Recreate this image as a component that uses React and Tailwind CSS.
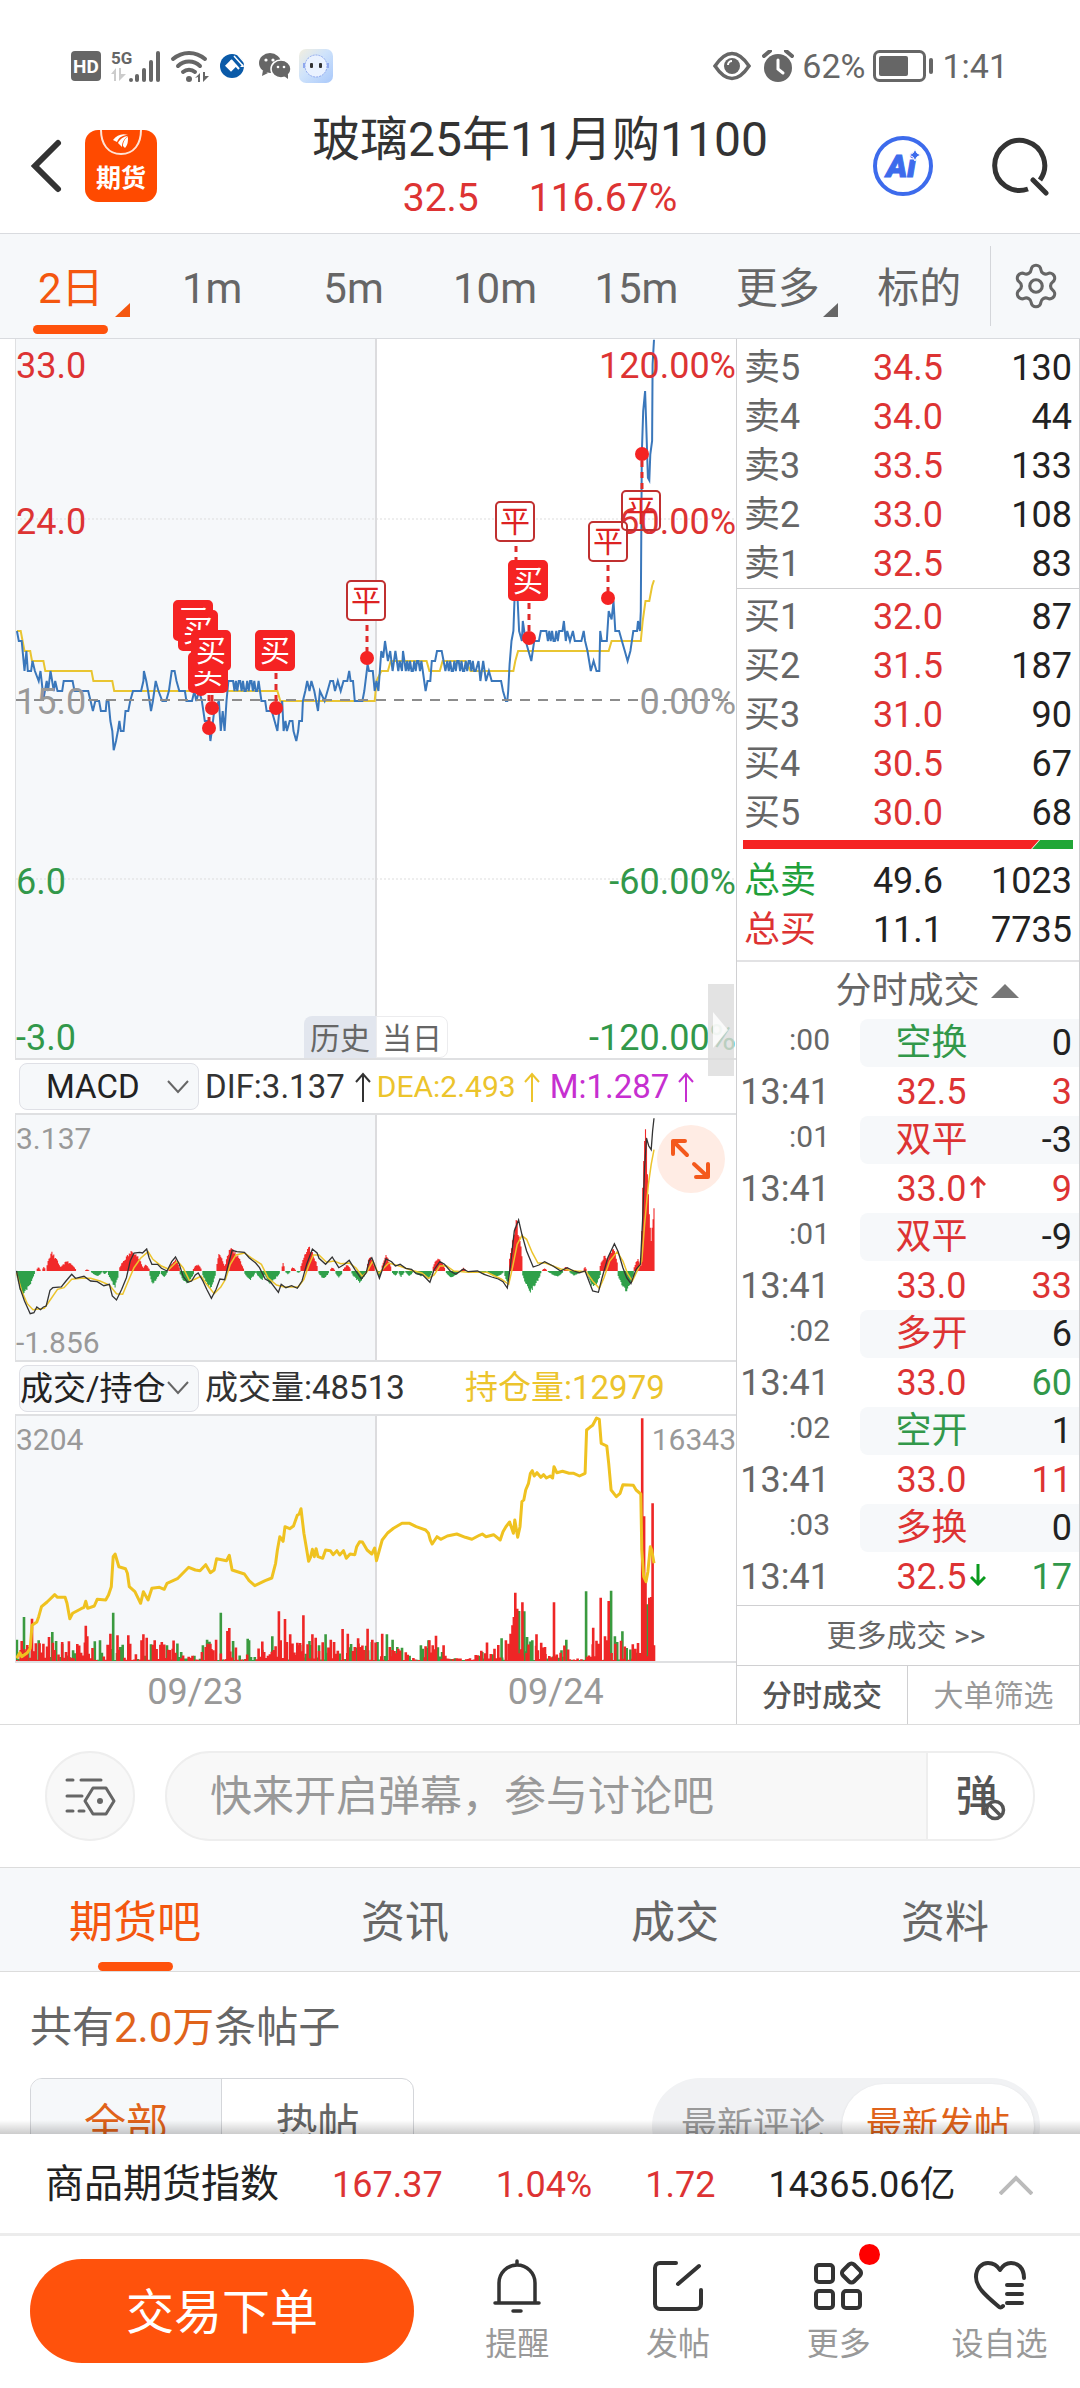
import React from "react";
import { Settings } from "lucide-react";

/* ---------- chart data: flat [x, y, x, y, ...] in sampling units ---------- */

const KX = 2.119;
const toPoints = (raw, base) => {
  const out = [];
  for (let i = 0; i < raw.length; i += 2) {
    out.push(`${((raw[i] - 32) / KX).toFixed(1)},${(raw[i + 1] / 3 - base).toFixed(1)}`);
  }
  return out.join(" ");
};
const zigzag = (from, to, a, b) => {
  const out = [];
  let k = 0;
  for (let x = from; x <= to; x += 3) {
    out.push(x, k % 2 ? b : a);
    k += k % 5 === 3 ? 2 : 1;
  }
  return out;
};

const PRICE = [
  34, 900, 38, 930, 44, 930, 50, 1020, 54, 960, 57, 1020, 64, 1020, 67, 990, 72, 1020, 80, 1050, 84, 1020, 87, 1060, 90, 1105, 97, 1050, 100, 1080,
  105, 1020, 112, 1080, 115, 1050, 120, 1080, 130, 1080, 133, 1050, 152, 1050, 156, 1080, 185, 1080, 190, 1110, 195, 1140, 200, 1110, 208, 1110, 212, 1140,
  222, 1140, 224, 1110, 228, 1110, 232, 1170, 236, 1200, 239, 1258, 244, 1230, 248, 1200, 251, 1170, 254, 1200, 260, 1200, 264, 1140, 270, 1140, 274, 1110,
  280, 1080, 297, 1080, 302, 1050, 303, 1020, 308, 1050, 312, 1080, 318, 1140, 322, 1110, 328, 1050, 334, 1080, 342, 1110, 350, 1110, 356, 1080,
  362, 1020, 368, 1020, 372, 1050, 378, 1080, 390, 1080, 393, 1110, 405, 1110, 410, 1080, 414, 1110, 420, 1080, 426, 1110, 432, 1170, 440, 1170, 444, 1230,
  447, 1200, 452, 1140, 462, 1110, 466, 1200, 470, 1140, 474, 1200, 478, 1110, 482, 1050, 492, 1050, ...zigzag(495, 548, 1080, 1050),
  552, 1110, 560, 1110, 563, 1140, 574, 1140, 580, 1170, 586, 1200, 590, 1140, 596, 1110, 599, 1200, 603, 1170, 606, 1200, 612, 1170, 618, 1170, 620, 1200,
  626, 1230, 630, 1200, 632, 1170, 638, 1170, 640, 1110, 645, 1080, 649, 1050, 654, 1080, 658, 1050, 664, 1080, 672, 1140, 676, 1080, 686, 1110, 692, 1080,
  698, 1050, 704, 1050, 708, 1080, 714, 1050, 720, 1080, 726, 1050, 734, 1050, 738, 1020, 741, 1050, 746, 1050, 750, 1110, 766, 1110, 770, 1080,
  777, 1000, 780, 1020, 788, 1020, 792, 1080, 796, 1050, 800, 1080, 806, 960, 810, 980, 814, 930, 820, 990, 825, 960, 830, 1020, 836, 960, 842, 1020,
  845, 990, 850, 1020, 852, 960, 858, 1020, ...zigzag(861, 895, 990, 1020), 900, 1080, 904, 1050, 910, 1050, 913, 990, 920, 990, 924, 960, 934, 960,
  938, 990, 942, 1020, ...zigzag(946, 1008, 990, 1020), 1012, 990, 1016, 1050, 1022, 990, 1028, 1050, 1034, 1020, 1040, 1050, 1060, 1050, 1064, 1080,
  1070, 1110, 1073, 1110, 1075, 1080, 1078, 1000, 1082, 930, 1086, 900, 1089, 780, 1094, 780, 1098, 900, 1104, 930, 1106, 870, 1112, 930, 1118, 960,
  1124, 990, 1130, 930, 1140, 930, 1144, 900, 1156, 900, 1159, 930, ...zigzag(1162, 1184, 900, 930), 1190, 900, 1193, 870, 1197, 930, 1200, 900,
  1206, 930, 1212, 900, 1216, 930, 1230, 930, 1235, 900, 1238, 930, 1243, 960, 1250, 1020, 1256, 990, 1262, 1020, 1268, 1020, 1270, 900, 1273, 930,
  1284, 930, 1288, 840, 1294, 865, 1298, 810, 1302, 900, 1310, 900, 1316, 930, 1322, 960, 1328, 990, 1334, 960, 1340, 900, 1348, 900, 1350, 870, 1354, 900,
  1356, 840, 1358, 370, 1361, 240, 1365, 180, 1367, 260, 1371, 440, 1374, 448, 1376, 370, 1380, 330, 1381, 100, 1384, 26,
];
const AVG = [
  34, 900, 42, 900, 50, 960, 62, 960, 66, 990, 90, 990, 94, 1020, 192, 1020, 196, 1050, 236, 1050, 240, 1080, 586, 1080, 592, 1110, 792, 1110, 796, 1050,
  806, 1020, 820, 1020, 826, 990, 902, 990, 908, 1020, 930, 1020, 936, 990, 985, 990, 995, 1020, 1086, 1020, 1090, 990, 1096, 960, 1288, 960, 1294, 930,
  1356, 930, 1360, 870, 1366, 810, 1374, 810, 1380, 765, 1384, 748,
];
const HUMPS = [
  [33, 46, 72, -80], [75, 80, 84, 14], [87, 91, 95, 14], [96, 107, 128, 60], [122, 140, 160, 32], [178, 182, 188, 5], [190, 205, 215, -18], [215, 220, 226, -10],
  [226, 242, 250, -50], [250, 280, 302, 68], [300, 306, 316, 22], [314, 322, 338, -42], [338, 345, 354, -20], [354, 370, 380, 36], [378, 394, 410, -42],
  [406, 417, 426, 22], [426, 444, 456, -55], [456, 463, 476, 58], [474, 487, 515, 76], [515, 528, 540, -30], [540, 553, 560, -30], [558, 568, 592, -42],
  [594, 598, 602, 24], [602, 608, 614, -10], [614, 618, 626, 12], [626, 630, 636, -6], [634, 653, 672, 78], [672, 684, 696, -26], [697, 702, 708, 12],
  [708, 716, 724, -24], [724, 734, 742, 20], [742, 760, 775, -36], [775, 782, 793, 50], [796, 802, 807, -20], [806, 816, 828, 50], [828, 836, 842, -16],
  [842, 848, 856, -18], [856, 866, 874, -16], [874, 890, 900, -16], [895, 906, 914, -28], [914, 926, 942, 44], [942, 954, 972, -22], [974, 980, 986, 10],
  [1012, 1020, 1030, -10], [1030, 1050, 1066, -20], [1066, 1073, 1078, -40], [1076, 1093, 1106, 160], [1104, 1122, 1145, -66], [1146, 1152, 1158, 8],
  [1158, 1180, 1192, -18], [1192, 1197, 1204, 14], [1204, 1214, 1232, -14], [1234, 1238, 1241, 14], [1242, 1256, 1272, -54], [1268, 1280, 1290, 54],
  [1280, 1298, 1308, 78], [1306, 1324, 1342, -66], [1340, 1350, 1358, 40],
];
const DIF = [
  33, 660, 40, 710, 50, 750, 62, 788, 70, 785, 76, 768, 84, 776, 90, 768, 96, 765, 104, 718, 110, 710, 128, 708, 138, 690, 150, 670, 158, 682, 176, 676,
  190, 690, 204, 692, 218, 704, 230, 700, 236, 735, 245, 747, 256, 715, 266, 680, 274, 630, 282, 606, 294, 604, 300, 606, 309, 594, 314, 620, 320, 640,
  332, 640, 340, 652, 352, 660, 362, 632, 370, 618, 378, 640, 386, 676, 396, 694, 404, 690, 412, 672, 418, 666, 428, 690, 436, 715, 446, 742, 456, 715,
  464, 684, 474, 686, 482, 640, 490, 598, 500, 602, 516, 604, 526, 620, 540, 636, 548, 650, 560, 684, 572, 694, 588, 724, 594, 700, 604, 710, 616, 704,
  628, 712, 638, 690, 648, 640, 660, 594, 670, 606, 674, 622, 688, 640, 702, 618, 716, 650, 728, 640, 738, 628, 750, 655, 764, 684, 774, 665, 780, 630,
  786, 620, 794, 650, 802, 682, 816, 624, 828, 632, 836, 645, 846, 640, 858, 652, 870, 655, 880, 668, 894, 672, 909, 694, 918, 656, 930, 632, 940, 640,
  952, 660, 964, 670, 980, 654, 990, 662, 1010, 660, 1024, 670, 1040, 678, 1054, 684, 1064, 692, 1073, 711, 1080, 640, 1088, 540, 1097, 507, 1104, 550,
  1114, 600, 1128, 648, 1140, 642, 1152, 632, 1170, 645, 1186, 660, 1200, 650, 1214, 660, 1226, 665, 1238, 660, 1246, 690, 1254, 720, 1266, 724, 1274, 680,
  1286, 620, 1300, 578, 1308, 602, 1318, 650, 1326, 680, 1335, 698, 1346, 655, 1355, 640, 1360, 500, 1364, 350, 1368, 262, 1373, 285, 1378, 296, 1381, 240, 1384, 202,
];
const DEA = [
  33, 665, 44, 720, 56, 758, 68, 776, 92, 772, 104, 748, 120, 715, 134, 710, 150, 685, 170, 682, 190, 682, 210, 690, 230, 702, 245, 728, 258, 730, 270, 690,
  282, 650, 296, 622, 312, 602, 322, 625, 340, 645, 356, 655, 374, 630, 386, 650, 400, 690, 412, 684, 424, 676, 436, 700, 452, 728, 466, 708, 476, 685,
  486, 640, 498, 612, 516, 606, 530, 620, 552, 640, 566, 680, 584, 702, 600, 708, 630, 708, 642, 685, 652, 645, 662, 612, 674, 612, 690, 634, 706, 630,
  720, 638, 738, 636, 752, 650, 766, 676, 776, 662, 788, 630, 800, 668, 812, 650, 822, 636, 846, 646, 870, 658, 892, 666, 906, 682, 918, 672, 930, 645,
  944, 644, 960, 660, 990, 664, 1030, 664, 1060, 684, 1076, 700, 1084, 650, 1094, 580, 1104, 554, 1114, 565, 1126, 605, 1138, 636, 1154, 636, 1186, 654,
  1220, 660, 1240, 662, 1254, 690, 1268, 712, 1278, 680, 1290, 630, 1306, 602, 1318, 630, 1328, 668, 1338, 690, 1350, 655, 1358, 630, 1364, 520, 1372, 400,
  1378, 340, 1384, 296,
];
const OPEN_INTEREST = [
  33, 925, 40, 908, 44, 920, 56, 908, 62, 895, 66, 826, 76, 816, 80, 800, 86, 770, 98, 756, 114, 734, 120, 742, 136, 742, 140, 760, 146, 806, 152, 790,
  170, 776, 176, 772, 180, 754, 184, 775, 198, 768, 204, 748, 222, 750, 228, 735, 234, 710, 238, 620, 242, 612, 250, 650, 264, 656, 268, 670, 272, 710,
  284, 725, 296, 760, 302, 725, 312, 750, 320, 715, 336, 712, 346, 718, 352, 700, 374, 686, 398, 652, 412, 660, 422, 662, 434, 644, 444, 668, 452, 660,
  457, 626, 478, 632, 484, 616, 490, 660, 516, 672, 526, 692, 538, 707, 560, 692, 574, 684, 582, 640, 586, 600, 591, 560, 598, 574, 602, 530, 612, 536,
  620, 528, 628, 496, 632, 492, 636, 476, 642, 550, 647, 590, 652, 634, 656, 622, 660, 598, 664, 620, 668, 596, 672, 620, 682, 625, 688, 600, 698, 602,
  704, 614, 712, 602, 718, 615, 726, 602, 732, 625, 740, 612, 750, 614, 754, 590, 760, 575, 766, 576, 776, 600, 786, 612, 792, 594, 796, 632, 802, 600,
  808, 570, 820, 548, 832, 535, 850, 520, 866, 520, 880, 530, 900, 540, 906, 550, 910, 570, 914, 582, 924, 560, 932, 568, 946, 558, 966, 552, 984, 562,
  998, 568, 1014, 556, 1020, 552, 1028, 560, 1044, 554, 1058, 570, 1064, 545, 1070, 530, 1078, 516, 1086, 550, 1089, 510, 1095, 562, 1100, 530, 1104, 455,
  1108, 450, 1112, 420, 1118, 400, 1122, 370, 1126, 362, 1130, 378, 1136, 368, 1144, 382, 1150, 374, 1156, 384, 1164, 378, 1169, 384, 1172, 350, 1178, 368,
  1190, 364, 1204, 370, 1214, 370, 1226, 378, 1238, 370, 1241, 240, 1248, 232, 1254, 226, 1262, 204, 1268, 208, 1272, 280, 1284, 288, 1288, 340, 1293, 420,
  1304, 440, 1312, 430, 1318, 404, 1340, 406, 1346, 420, 1356, 432, 1358, 600, 1362, 680, 1367, 695, 1371, 665, 1376, 590, 1379, 600, 1384, 640,
];
const RED_VOL = [
  66, 805, 44, 872, 56, 884, 102, 860, 130, 875, 144, 873, 180, 826, 183, 858, 232, 850, 247, 855, 270, 855, 274, 880, 302, 852, 298, 870, 309, 862, 341, 875, 364, 895, 444, 880, 456, 868,
  480, 842, 484, 833, 589, 783, 593, 870, 602, 806, 613, 852, 628, 877, 634, 878, 641, 795, 660, 852, 667, 862, 699, 868, 724, 836, 735, 850, 750, 890, 757, 864,
  777, 835, 787, 868, 808, 850, 824, 890, 900, 888, 908, 870, 915, 885, 922, 856, 1046, 895, 1070, 870, 1076, 880, 1080, 850, 1084, 825, 1087, 800, 1090, 727, 1094, 775,
  1105, 756, 1135, 852, 1145, 877, 1153, 890, 1172, 756, 1255, 832, 1266, 880, 1271, 742, 1280, 858, 1284, 870, 1288, 752, 1339, 882, 1344, 895, 1359, 204, 1363, 498, 1366, 690, 1374, 742, 1378, 740, 1381, 459, 1384, 885,
];
const GREEN_VOL = [
  34, 868, 49, 800, 80, 870, 109, 845, 117, 872, 153, 900, 199, 873, 238, 787, 253, 890, 318, 882, 352, 885, 382, 905, 428, 885, 437, 868, 466, 787, 492, 872, 523, 865,
  554, 898, 575, 858, 654, 872, 674, 885, 688, 852, 798, 880, 818, 852, 830, 868, 840, 890, 935, 905, 1020, 905, 1061, 864, 1098, 782, 1109, 783, 1115, 860, 1122, 875, 1198, 868, 1188, 900,
  1240, 723, 1293, 721, 1301, 858, 1317, 843, 1369, 762,
];

const random = (start) => {
  let seed = start;
  return () => (seed = (seed * 16807) % 2147483647) / 2147483647;
};

const macdBars = (() => {
  const red = [];
  const green = [];
  const rnd = random(11);
  HUMPS.forEach(([a, p, b, h]) => {
    for (let x = a; x <= b; x += 2) {
      const t = x < p ? (x - a) / (p - a) : (b - x) / (b - p);
      const v = ((h * Math.pow(Math.max(t, 0), 0.65)) / 3) * (0.8 + 0.2 * rnd());
      (h > 0 ? red : green).push(`M${((x - 32) / KX).toFixed(1)} 156v${(-v).toFixed(1)}`);
    }
  });
  [[1358, 120], [1360, 250], [1362, 330], [1364, 390], [1366, 425], [1368, 400], [1370, 290], [1372, 230], [1374, 170], [1376, 130], [1378, 90], [1380, 130], [1382, 155], [1384, 188]].forEach(
    ([x, h]) => red.push(`M${((x - 32) / KX).toFixed(1)} 156v${(-h / 3).toFixed(1)}`)
  );
  return { red: red.join(""), green: green.join("") };
})();

const volumeBars = (() => {
  const red = [];
  const green = [];
  const rnd = random(7);
  const bar = (x, top) => `M${((x - 32) / KX).toFixed(1)} 246V${(246 - (935 - top) / 3).toFixed(1)}`;
  for (let x = 34; x < 1386; x += 4) {
    const quiet = (x > 945 && x < 1005) || (x > 1205 && x < 1235) ? 0.12 : (x > 376 && x < 420) || (x > 1160 && x < 1185) ? 0.4 : 1;
    const h = 6 + Math.pow(rnd(), 2.2) * 60 * quiet;
    (rnd() > 0.32 ? red : green).push(bar(x, 935 - h));
  }
  for (let i = 0; i < RED_VOL.length; i += 2) red.push(bar(RED_VOL[i], RED_VOL[i + 1]));
  for (let i = 0; i < GREEN_VOL.length; i += 2) green.push(bar(GREEN_VOL[i], GREEN_VOL[i + 1]));
  return { red: red.join(""), green: green.join("") };
})();

/* trade flags: x, y, label, filled */
const FLAGS = [
  [158, 262, "买", true], [163, 272, "买", true], [173, 314, "买", true], [176, 292, "买", true], [240, 292, "买", true],
  [331, 242, "平", false], [480, 163, "平", false], [493, 222, "买", true], [573, 183, "平", false], [606, 152, "平", false],
];
/* dot x, dot y, other end of the dashed stem */
const DOTS = [
  [196, 369, 334], [193, 389, 356], [185, 350, 345], [260, 369, 334], [351, 319, 286], [500, 240, 207], [513, 299, 264], [592, 259, 226], [626, 115, 150],
];

/* ---------- small icons ---------- */

const Down = () => (
  <svg className="pointer-events-none absolute right-[10px] top-1/2 -mt-[7px] h-[14px] w-[22px]" viewBox="0 0 22 14" fill="none" stroke="#666" strokeWidth="2">
    <path d="M1 1l10 11L21 1" />
  </svg>
);
const Up = () => (
  <svg className="h-[30px] w-[16px]" viewBox="0 0 16 30" fill="none" stroke="currentColor" strokeWidth="2">
    <path d="M8 30V2M1 10l7-8 7 8" />
  </svg>
);

function StatusBar() {
  return (
    <div className="flex h-[110px] items-center justify-between pl-[71px] pr-[72px] pt-[22px] text-[#666]">
      <div className="flex items-center">
        <svg className="h-[30px] w-[30px]" viewBox="0 0 30 30">
          <rect width="30" height="30" rx="4" fill="#666" />
          <text x="15" y="22" textAnchor="middle" fontSize="19" fontWeight="700" fill="#fff">HD</text>
        </svg>
        <svg className="ml-[10px] h-[34px] w-[52px]" viewBox="0 0 52 34" fill="#666">
          <text x="0" y="15" fontSize="17" fontWeight="700">5G</text>
          <path d="M0 25l5-6v13H3v-7zM8 19h2v6h5l-7 7z" fill="#ccc" />
          <circle cx="20" cy="31" r="2" />
          <rect x="24" y="25" width="4" height="8" rx="2" /><rect x="31" y="19" width="4" height="14" rx="2" />
          <rect x="38" y="11" width="4" height="22" rx="2" /><rect x="45" y="2" width="4" height="31" rx="2" />
        </svg>
        <svg className="ml-[7px] h-[34px] w-[40px]" viewBox="0 0 40 34" fill="none" stroke="#666" strokeWidth="4" strokeLinecap="round">
          <path d="M3 10a24 24 0 0 1 32 0M8 17a16 16 0 0 1 22 0M13 23a9 9 0 0 1 12 0" />
          <circle cx="19" cy="30" r="3" fill="#666" stroke="none" />
          <path d="M25 29l5-5v9h-2v-5zM33 23h2v4h4l-6 6z" fill="#666" stroke="none" />
        </svg>
        <svg className="ml-[9px] h-[26px] w-[26px]" viewBox="0 0 26 26">
          <circle cx="13" cy="13" r="12" fill="#0a5aa8" />
          <path d="M12 5l8 8-8 8-8-8z" fill="#fff" transform="translate(3 3) scale(.75)" />
          <path d="M12 7l8 9" stroke="#fff" strokeWidth="2" />
          <path d="M15 3l9 10M19 2l6 7" stroke="#fff" strokeWidth="1.500" />
          <path d="M25 14l-4 0 3-3z" fill="#fff" />
        </svg>
        <svg className="ml-[13px] h-[28px] w-[34px]" viewBox="0 0 34 28" fill="#666">
          <ellipse cx="12" cy="11" rx="11" ry="10" /><path d="M5 18l-1 6 6-3z" />
          <ellipse cx="23" cy="17" rx="10" ry="9" stroke="#fff" strokeWidth="1.5" /><path d="M26 24l4 3v-5z" />
          <circle cx="8" cy="8" r="1.6" fill="#fff" /><circle cx="15" cy="8" r="1.6" fill="#fff" />
          <circle cx="20" cy="15" r="1.3" fill="#fff" /><circle cx="26" cy="15" r="1.3" fill="#fff" />
        </svg>
        <svg className="ml-[7px] h-[34px] w-[34px]" viewBox="0 0 34 34">
          <defs><linearGradient id="bot" x1="0" y1="0" x2="1" y2="1"><stop offset="0" stopColor="#f3efdf" /><stop offset="0.45" stopColor="#cfe3fb" /><stop offset="1" stopColor="#a9c8fa" /></linearGradient></defs>
          <rect width="34" height="34" rx="7" fill="url(#bot)" />
          <circle cx="17" cy="17" r="11" fill="#eaf2ff" stroke="#8fa8ee" strokeDasharray="2 1" />
          <path d="M5 14v5M29 14v5" stroke="#8fa8ee" strokeWidth="2" />
          <rect x="11" y="14" width="3" height="5" rx="1" fill="#333" /><rect x="20" y="14" width="3" height="5" rx="1" fill="#333" />
        </svg>
      </div>
      <div className="flex items-center text-[34px] leading-[40px]">
        <svg className="h-[30px] w-[38px]" viewBox="0 0 38 30" fill="none" stroke="#666" strokeWidth="3.5">
          <path d="M2 15C8 6 13 2.500 19 2.500S30 6 36 15c-6 9-11 12.500-17 12.500S8 24 2 15z" />
          <circle cx="19" cy="15" r="8" fill="#666" stroke="none" /><path d="M15 14a4 4 0 0 1 4-4" stroke="#fff" strokeWidth="2" />
        </svg>
        <svg className="ml-[11px] h-[32px] w-[32px]" viewBox="0 0 32 32">
          <circle cx="16" cy="18" r="14" fill="#666" />
          <path d="M2 6l6-5M30 6l-6-5" stroke="#666" strokeWidth="4" strokeLinecap="round" />
          <path d="M16 10v9l5 4" stroke="#fff" strokeWidth="3" fill="none" strokeLinecap="round" />
        </svg>
        <span className="ml-[8px]">62%</span>
        <svg className="ml-[8px] h-[32px] w-[60px]" viewBox="0 0 60 32">
          <rect x="1.500" y="1.500" width="50" height="29" rx="5" fill="none" stroke="#666" strokeWidth="3" />
          <rect x="6" y="6" width="29" height="20" rx="2" fill="#666" />
          <rect x="56" y="8" width="4" height="16" rx="2" fill="#666" />
        </svg>
        <span className="ml-[9px]">1:41</span>
      </div>
    </div>
  );
}

function Header() {
  return (
    <header className="grid h-[123px] grid-cols-[1fr_auto_1fr] items-center pb-[11px]">
      <div className="flex items-center pl-[29px]">
        <button type="button" aria-label="返回">
          <svg className="block h-[56px] w-[34px]" viewBox="0 0 34 56" fill="none" stroke="#333" strokeWidth="6" strokeLinecap="round">
            <path d="M29 5L6 28l23 23" />
          </svg>
        </button>
        <svg className="ml-[22px] h-[72px] w-[72px]" viewBox="0 0 72 72">
          <rect width="72" height="72" rx="13" fill="#ff4a00" />
          <path d="M16 0c0 14 7 24 20 24S56 14 56 0" fill="none" stroke="#ffe3d5" strokeWidth="2" />
          <path d="M28 10c4-5 9-7 15-5-5 0-9 2-11 7zM33 13c2-4 6-7 10-7-4 3-6 6-6 11zM38 16c0-4 2-8 5-9 0 4 0 8-3 11z" fill="#fff" />
          <text x="36" y="57" textAnchor="middle" fontSize="25" fontWeight="700" fill="#fff">期货</text>
        </svg>
      </div>
      <div className="text-center">
        <h1 className="text-[48px] leading-[56px] text-[#333]">玻璃25年11月购1100</h1>
        <p className="mt-[8px] flex justify-center gap-[50px] text-[39px] leading-[44px] text-[#dd3333]">
          <span>32.5</span>
          <span>116.67%</span>
        </p>
      </div>
      <div className="flex items-center justify-end gap-[58px] pr-[29px]">
        <button type="button" aria-label="Ai">
          <svg className="block h-[60px] w-[60px]" viewBox="0 0 60 60">
            <circle cx="30" cy="30" r="28" fill="none" stroke="#3d6bec" strokeWidth="4" />
            <text x="28" y="41" textAnchor="middle" fontSize="32" fontWeight="900" fontStyle="italic" fill="#3d6bec" stroke="#3d6bec" strokeWidth="1">Ai</text>
            <path d="M42 13q1 5 6 6-5 1-6 6-1-5-6-6 5-1 6-6z" fill="#3d6bec" stroke="#fff" strokeWidth="1" />
          </svg>
        </button>
        <button type="button" aria-label="搜索">
          <svg className="block h-[60px] w-[60px]" viewBox="0 0 60 60" fill="none" stroke="#333" strokeWidth="5">
            <path d="M37 53a25 25 0 1 1 12-9" />
            <path d="M42 44l13 13" strokeLinecap="round" />
          </svg>
        </button>
      </div>
    </header>
  );
}

const PERIODS = ["2日", "1m", "5m", "10m", "15m", "更多", "标的"];

function PeriodTabs() {
  return (
    <nav className="flex h-[106px] border-y border-[#d9dbdf] bg-[#f6f8fa] text-[42px] text-[#666]">
      <div className="grid flex-1 grid-cols-7">
        {PERIODS.map((p, i) => (
          <button key={p} type="button" className={i === 0 ? "relative pt-[4px] text-[#f4570f]" : "relative pt-[4px]"}>
            {p}
            {(i === 0 || i === 5) && (
              <svg className="absolute bottom-[21px] right-[11px] h-[14px] w-[15px]" viewBox="0 0 15 14" fill="currentColor"><path d="M15 0v14H0z" /></svg>
            )}
            {i === 0 && <span className="absolute bottom-[4px] left-[33px] h-[9px] w-[75px] rounded-full bg-[#ff520c]" />}
          </button>
        ))}
      </div>
      <div className="my-[12px] w-px bg-[#d4d6da]" />
      <button type="button" aria-label="设置" className="flex w-[89px] items-center justify-center">
        <Settings size={50} strokeWidth={1.5} />
      </button>
    </nav>
  );
}

const GRID_LABELS = [
  ["33.0", "120.00%", "top-[7px] text-[#dd3333]"],
  ["24.0", "60.00%", "top-[163px] text-[#dd3333]"],
  ["15.0", "0.00%", "top-[343px] text-[#999]"],
  ["6.0", "-60.00%", "top-[523px] text-[#32984a]"],
  ["-3.0", "-120.00%", "top-[679px] text-[#32984a]"],
];

function PriceChart() {
  return (
    <div className="relative border-b-2 border-l border-[#dfe0e2]">
      <svg className="block h-[719px] w-full" viewBox="0 0 720 719" preserveAspectRatio="none" fill="none">
        <rect width="360" height="719" fill="#f6f8fa" />
        <path d="M360 0v719" stroke="#dcdcde" strokeWidth="2" />
        <path d="M0 180h720M0 540h720" stroke="#ddd" strokeDasharray="2 2" />
        <polyline points={toPoints(AVG, 8)} stroke="#e9c531" strokeWidth="2" />
        <polyline points={toPoints(PRICE, 8)} stroke="#3a77bb" strokeWidth="2" />
        <path d="M0 361h720" stroke="#8c8c8c" strokeWidth="2" strokeDasharray="10 8" />
      </svg>
      {GRID_LABELS.map(([l, r, c]) => (
        <div key={l} className={`absolute inset-x-0 flex justify-between text-[36px] leading-[40px] ${c}`}>
          <span>{l}</span>
          <span>{r}</span>
        </div>
      ))}
      <svg className="absolute inset-0 h-[719px] w-full" viewBox="0 0 720 719" preserveAspectRatio="none">
        {DOTS.map(([x, y, s]) => (
          <g key={`${x}-${y}`}>
            <path d={`M${x} ${s}V${y}`} stroke="#e02a2a" strokeWidth="3" strokeDasharray="6 5" />
            <circle cx={x} cy={y} r="7" fill="#f52323" />
          </g>
        ))}
        {FLAGS.map(([x, y, t, fill]) => (
          <g key={`${x}-${y}`}>
            <rect x={x} y={y} width="38" height="39" rx="4" fill={fill ? "#f52323" : "#fff"} fillOpacity={!fill && y < 160 ? 0 : 1} stroke={fill ? "#f52323" : "#c03030"} strokeWidth="2" />
            <text x={x + 19} y={y + 30} textAnchor="middle" fontSize="30" fill={fill ? "#fff" : "#dd2222"}>{t}</text>
          </g>
        ))}
      </svg>
      <div className="absolute bottom-0 left-0 right-0 flex justify-center text-[30px] leading-[42px] text-[#666]">
        <button type="button" className="h-[42px] w-[72px] rounded-tl-lg bg-[#e2e6ee] pt-[2px]">历史</button>
        <button type="button" className="h-[42px] w-[72px] rounded-r-lg border border-[#ececee] bg-white pt-px">当日</button>
      </div>
      <button type="button" aria-label="收起" className="absolute -bottom-[18px] right-[2px] z-10 h-[92px] w-[26px] bg-[#dcdcdc]/80">
        <svg className="mx-auto block h-[36px] w-[16px]" viewBox="0 0 16 36" fill="#fff" fillOpacity="0.8"><path d="M0 0l15 18L0 36z" /></svg>
      </button>
    </div>
  );
}

const selectBox = "h-[47px] w-[180px] appearance-none rounded-lg border border-[#dfe0e6] bg-[#f6f8fa] text-[33px] leading-[45px] text-[#222] outline-none";

function ChartsColumn() {
  return (
    <section className="min-w-0 pl-[15px]">
      <PriceChart />
      <div className="flex h-[53px] items-center whitespace-nowrap pl-[4px] text-[33px] leading-[40px]">
        <div className="relative">
          <select aria-label="指标" className={`${selectBox} pl-[26px]`} defaultValue="MACD"><option>MACD</option></select>
          <Down />
        </div>
        <span className="ml-[6px] flex items-center gap-[10px] text-[#333]">DIF:3.137 <Up /></span>
        <span className="ml-[6px] flex items-center gap-[8px] text-[30px] text-[#ecc42c]">DEA:2.493 <Up /></span>
        <span className="ml-[10px] flex items-center gap-[9px] text-[#c62fd0]">M:1.287 <Up /></span>
      </div>
      <div className="relative border-y-2 border-l border-[#dfe0e2]">
        <svg className="block h-[245px] w-full" viewBox="0 0 720 245" preserveAspectRatio="none" fill="none">
          <rect width="360" height="245" fill="#f6f8fa" />
          <path d="M360 0v245" stroke="#dcdcde" strokeWidth="2" />
          <path d={macdBars.red} stroke="#f12a2a" strokeWidth="1.1" />
          <path d={macdBars.green} stroke="#2fa04a" strokeWidth="1.1" />
          <polyline points={toPoints(DEA, 64)} stroke="#ecc42c" strokeWidth="1.5" />
          <polyline points={toPoints(DIF, 64)} stroke="#333" strokeWidth="1.3" />
        </svg>
        <span className="absolute left-0 top-[6px] text-[30px] leading-[36px] text-[#999]">3.137</span>
        <span className="absolute -bottom-px left-0 text-[30px] leading-[36px] text-[#999]">-1.856</span>
        <button type="button" aria-label="全屏" className="absolute right-[11px] top-[10px] flex h-[68px] w-[68px] items-center justify-center rounded-full bg-[#ffece4]">
          <svg className="h-[44px] w-[44px]" viewBox="0 0 44 44" fill="none" stroke="#f4591c" strokeWidth="4" strokeLinecap="round" strokeLinejoin="round">
            <path d="M18 18L4 4M4 17V4h12M25 27l14 13M39 27v13H27" />
          </svg>
        </button>
      </div>
      <div className="flex h-[52px] items-center whitespace-nowrap pl-[4px] text-[33px] leading-[40px]">
        <div className="relative">
          <select aria-label="副图" className={selectBox} defaultValue="成交/持仓"><option>成交/持仓</option></select>
          <Down />
        </div>
        <span className="ml-[6px] w-[260px] text-[#333]">成交量:48513</span>
        <span className="text-[#ecc42c]">持仓量:12979</span>
      </div>
      <div className="relative border-y-2 border-l border-[#dfe0e2]">
        <svg className="block h-[245px] w-full" viewBox="0 0 720 245" preserveAspectRatio="none" fill="none">
          <rect width="360" height="245" fill="#f6f8fa" />
          <path d="M360 0v245" stroke="#dcdcde" strokeWidth="2" />
          <path d={volumeBars.green} stroke="#3a9a3f" strokeWidth="2.6" />
          <path d={volumeBars.red} stroke="#ee2626" strokeWidth="2.6" />
          <polyline points={toPoints(OPEN_INTEREST, 66)} stroke="#efc220" strokeWidth="3" strokeLinejoin="round" />
        </svg>
        <span className="absolute left-0 top-[6px] text-[30px] leading-[36px] text-[#999]">3204</span>
        <span className="absolute right-0 top-[6px] text-[30px] leading-[36px] text-[#999]">16343</span>
      </div>
      <div className="grid h-[61px] grid-cols-2 text-center text-[36px] leading-[58px] text-[#999]">
        <span>09/23</span>
        <span>09/24</span>
      </div>
    </section>
  );
}

const ASKS = [["卖5", "34.5", "130"], ["卖4", "34.0", "44"], ["卖3", "33.5", "133"], ["卖2", "33.0", "108"], ["卖1", "32.5", "83"]];
const BIDS = [["买1", "32.0", "87"], ["买2", "31.5", "187"], ["买3", "31.0", "90"], ["买4", "30.5", "67"], ["买5", "30.0", "68"]];
const TICKS = [
  [":00", "空换", "0", "32.5", "", "3", "g", "r"],
  [":01", "双平", "-3", "33.0", "up", "9", "r", "r"],
  [":01", "双平", "-9", "33.0", "", "33", "r", "r"],
  [":02", "多开", "6", "33.0", "", "60", "r", "g"],
  [":02", "空开", "1", "33.0", "", "11", "g", "r"],
  [":03", "多换", "0", "32.5", "down", "17", "r", "g"],
];
const TONE = { r: "text-[#dd3333]", g: "text-[#32984a]" };

function QuoteTable({ rows }) {
  return (
    <table className="w-full table-fixed text-[36px] leading-[40px]">
      <tbody>
        {rows.map(([a, b, c]) => (
          <tr key={a} className="h-[49px]">
            <th scope="row" className="pl-[7px] text-left font-normal text-[#666]">{a}</th>
            <td className="text-center text-[#dd3333]">{b}</td>
            <td className="pr-[7px] text-right text-[#222]">{c}</td>
          </tr>
        ))}
      </tbody>
    </table>
  );
}

function OrderBook() {
  return (
    <section className="flex min-w-0 flex-col border-x border-[#d0d0d2]">
      <div className="border-b border-[#cfcfd1] pt-[4px]"><QuoteTable rows={ASKS} /></div>
      <div className="pt-[3px]"><QuoteTable rows={BIDS} /></div>
      <div className="mx-[6px] mt-[3px]">
        <svg className="block h-[9px] w-full" viewBox="0 0 331 9" preserveAspectRatio="none">
          <path d="M0 0h297l-8 9H0z" fill="#f52323" /><path d="M298 0h33v9h-41z" fill="#21a637" />
        </svg>
      </div>
      <table className="mt-[7px] w-full table-fixed text-[36px] leading-[40px] text-[#222]">
        <tbody>
          <tr className="h-[49px]"><th scope="row" className="pl-[7px] text-left font-normal text-[#21a03a]">总卖</th><td className="text-center">49.6</td><td className="pr-[7px] text-right">1023</td></tr>
          <tr className="h-[49px]"><th scope="row" className="pl-[7px] text-left font-normal text-[#dd3333]">总买</th><td className="text-center">11.1</td><td className="pr-[7px] text-right">7735</td></tr>
        </tbody>
      </table>
      <button type="button" className="mt-[6px] flex h-[59px] items-center justify-center gap-[11px] border-t-2 border-[#e2e2e4] pl-[38px] text-[36px] text-[#666]">
        分时成交
        <svg className="h-[14px] w-[28px]" viewBox="0 0 28 14" fill="#777"><path d="M14 0l14 14H0z" /></svg>
      </button>
      <table className="w-full table-fixed text-[36px] leading-[40px]">
        <colgroup><col className="w-[123px]" /><col className="w-[143px]" /><col /></colgroup>
        <tbody>
          {TICKS.map(([sec, kind, delta, price, arrow, vol, kt, vt], i) => (
            <React.Fragment key={i}>
              <tr className="h-[48px]">
                <td className="pb-[7px] pr-[30px] text-right text-[30px] text-[#666]">{sec}</td>
                <td className={`rounded-l-lg bg-[#f6f8fa] text-center ${TONE[kt]}`}>{kind}</td>
                <td className="bg-[#f6f8fa] pr-[7px] text-right text-[#222]">{delta}</td>
              </tr>
              <tr className="h-[49px]">
                <td className="pr-[30px] text-right text-[#666]">13:41</td>
                <td className="relative text-center text-[#dd3333]">
                  {price}
                  {arrow && (
                    <svg className={arrow === "up" ? "absolute right-[17px] top-[12px] h-[22px] w-[16px]" : "absolute right-[17px] top-[12px] h-[22px] w-[16px] rotate-180 text-[#0a9a1e]"} viewBox="0 0 16 22" fill="none" stroke="currentColor" strokeWidth="3">
                      <path d="M8 22V2M1 9l7-7 7 7" />
                    </svg>
                  )}
                </td>
                <td className={`pr-[7px] text-right ${TONE[vt]}`}>{vol}</td>
              </tr>
            </React.Fragment>
          ))}
        </tbody>
      </table>
      <a href="#more" className="mt-[4px] flex flex-1 items-center justify-center border-y border-[#d0d0d2] pr-[4px] text-[30px] leading-[40px] text-[#666]">更多成交 &gt;&gt;</a>
      <div className="grid h-[58px] grid-cols-2 text-[30px]">
        <button type="button" className="border-r border-[#d0d0d2] font-medium text-[#555]">分时成交</button>
        <button type="button" className="text-[#999]">大单筛选</button>
      </div>
    </section>
  );
}

function ChatBar() {
  return (
    <section className="flex h-[144px] items-center border-y border-[#dcdcdc] bg-white pl-[45px] pr-[45px]">
      <button type="button" aria-label="弹幕设置" className="flex h-[90px] w-[90px] items-center justify-center rounded-full border-2 border-[#eee] bg-[#f8f8f8]">
        <svg className="h-[40px] w-[52px]" viewBox="0 0 52 40" fill="none" stroke="#666" strokeWidth="3" strokeLinecap="round">
          <path d="M3 4h6M17 4h20M3 20h15M3 35h6M15 35h5" />
          <path d="M29 12h13l8 13-8 13H29l-8-13z" strokeLinejoin="round" />
          <circle cx="36" cy="25" r="3" fill="#666" stroke="none" />
        </svg>
      </button>
      <div className="ml-[30px] flex h-[90px] min-w-0 flex-1 overflow-hidden rounded-full border-2 border-[#eee] bg-[#f8f8f8]">
        <input aria-label="弹幕" placeholder="快来开启弹幕，参与讨论吧" className="min-w-0 flex-1 bg-transparent pl-[43px] text-[42px] text-[#333] outline-none placeholder:text-[#999]" />
        <button type="button" aria-label="弹幕开关" className="relative w-[107px] border-l-2 border-[#eee] bg-white pr-[8px] text-[42px] font-medium text-[#555]">
          弹
          <svg className="absolute bottom-[17px] right-[26px] h-[24px] w-[24px]" viewBox="0 0 24 24" fill="#fff" stroke="#555" strokeWidth="3.5">
            <circle cx="12" cy="12" r="8.500" /><path d="M7 7l10 10" />
          </svg>
        </button>
      </div>
    </section>
  );
}

function Feed() {
  return (
    <>
      <nav className="grid h-[104px] grid-cols-4 border-b border-[#dcdcdc] bg-[#f6f8fa] text-[44px] text-[#666]">
        {["期货吧", "资讯", "成交", "资料"].map((t, i) => (
          <button key={t} type="button" className={i === 0 ? "relative pt-[6px] text-[#f4570f]" : "relative pt-[6px]"}>
            {t}
            {i === 0 && <span className="absolute bottom-0 left-1/2 -ml-[37px] h-[9px] w-[75px] rounded-full bg-[#ff520c]" />}
          </button>
        ))}
      </nav>
      <section className="relative h-[162px] overflow-hidden px-[30px] pt-[28px]">
        <p className="text-[42px] leading-[56px] text-[#666]">共有<span className="text-[#e0631a]">2.0万</span>条帖子</p>
        <div className="mt-[22px] flex items-start justify-between pr-[10px]">
          <div className="grid h-[92px] w-[384px] grid-cols-2 overflow-hidden rounded-xl border border-[#d4d6da] text-[42px] text-[#666]">
            <button type="button" className="border-r border-[#d4d6da] bg-[#f6f8fa] text-[#e0631a]">全部</button>
            <button type="button">热帖</button>
          </div>
          <div className="flex h-[96px] w-[388px] rounded-full bg-[#f1f2f4] p-[6px] text-[36px] text-[#999]">
            <button type="button" className="flex-1 pl-[6px]">最新评论</button>
            <button type="button" className="w-[192px] rounded-full bg-white text-[#e0631a] shadow">最新发帖</button>
          </div>
        </div>
        <div className="pointer-events-none absolute inset-x-0 bottom-0 h-[14px] bg-linear-to-t from-black/20 to-transparent" />
      </section>
    </>
  );
}

const iconProps = { fill: "none", stroke: "#333", strokeWidth: 4, strokeLinecap: "round", strokeLinejoin: "round", viewBox: "0 0 54 54", className: "h-[54px] w-[54px]" };
const ACTIONS = [
  ["提醒", <svg {...iconProps}><path d="M27 2v4M9 44V24a18 18 0 0 1 36 0v20M5 44h44M23 52h8" strokeWidth="3.500" /></svg>],
  ["发帖", <svg {...iconProps}><path d="M25 4H9a5 5 0 0 0-5 5v36a5 5 0 0 0 5 5h36a5 5 0 0 0 5-5V31M27 25L48 7" /></svg>],
  ["更多", <svg {...iconProps}><rect x="4" y="6" width="17" height="17" rx="3" /><rect x="4" y="32" width="17" height="17" rx="3" /><rect x="31" y="32" width="17" height="17" rx="3" /><path d="M37 5.500a3.500 3.500 0 0 1 5 0l6 6a3.500 3.500 0 0 1 0 5l-6 6a3.500 3.500 0 0 1-5 0l-6-6a3.500 3.500 0 0 1 0-5z" /></svg>],
  ["设自选", <svg {...iconProps}><path d="M30 47c-2 2-3 2-5 0C12 36 3 28 3 18 3 9 9 4 15 4c5 0 9 2 12 7 3-5 7-7 11-7 7 0 13 5 13 15M34 26h15M34 35h15M34 44h15" /></svg>],
];

function Footer() {
  return (
    <footer className="bg-white">
      <div className="flex h-[102px] items-center whitespace-nowrap border-b-[3px] border-[#ececec] pl-[45px] pr-[47px] pt-[2px] text-[36px] text-[#dd3333]">
        <span className="text-[39px] text-[#222]">商品期货指数</span>
        <span className="ml-[53px]">167.37</span>
        <span className="ml-[53px]">1.04%</span>
        <span className="ml-[53px]">1.72</span>
        <span className="ml-[53px] text-[#222]">14365.06亿</span>
        <button type="button" aria-label="展开" className="ml-auto">
          <svg className="block h-[20px] w-[34px]" viewBox="0 0 34 20" fill="none" stroke="#bbb" strokeWidth="4"><path d="M1 19L17 3l16 16" /></svg>
        </button>
      </div>
      <div className="flex h-[153px] pl-[30px]">
        <button type="button" className="mr-[23px] mt-[23px] h-[104px] w-[384px] rounded-full bg-[#ff520c] pt-[4px] text-[48px] text-white">交易下单</button>
        <div className="grid flex-1 grid-cols-4">
          {ACTIONS.map(([label, icon]) => (
            <button key={label} type="button" className="relative flex flex-col items-center pt-[23px] text-[32px] leading-[40px] text-[#999]">
              {icon}
              <span className="mt-[11px]">{label}</span>
              {label === "更多" && <span className="absolute left-1/2 top-[8px] ml-[20px] h-[21px] w-[21px] rounded-full bg-[#f00]" />}
            </button>
          ))}
        </div>
      </div>
    </footer>
  );
}

export default function App() {
  return (
    <div className="min-h-screen bg-white font-['Roboto','Noto_Sans_CJK_SC',sans-serif]">
      <StatusBar />
      <Header />
      <PeriodTabs />
      <main>
        <div className="grid grid-cols-[736fr_344fr]">
          <ChartsColumn />
          <OrderBook />
        </div>
        <ChatBar />
        <Feed />
      </main>
      <Footer />
    </div>
  );
}
